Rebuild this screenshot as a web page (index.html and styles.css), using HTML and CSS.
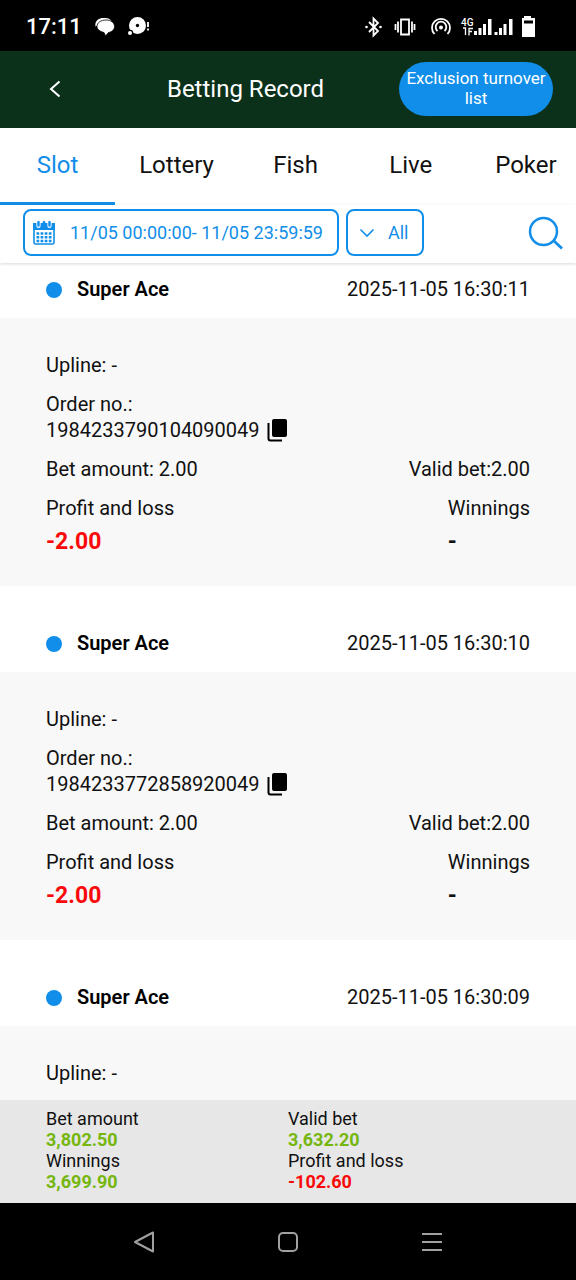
FILE: index.html
```html
<!DOCTYPE html>
<html lang="en">
<head>
<meta charset="utf-8">
<meta name="viewport" content="width=device-width, initial-scale=1">
<title>Betting Record</title>
<link rel="stylesheet" href="styles.css">
</head>
<body>
<svg class="defs" width="0" height="0" aria-hidden="true">
  <symbol id="copy" viewBox="0 0 21 24">
    <rect x="5" y="1" width="15" height="18" rx="2" fill="#000"/>
    <path d="M1.500 5v15.500q0 2 2 2H15" fill="none" stroke="#000" stroke-width="2"/>
  </symbol>
</svg>
<div class="status">
  <div class="status-side">
    <span class="clock">17:11</span>
    <svg width="20" height="20" viewBox="0 0 20 20" aria-hidden="true">
      <path d="M.5 9.500C-.5 4 3.500 1 8.500 1 12 1 15 1.500 16.500 4L4 8z" fill="#fff"/>
      <path d="M11 3c5 0 8.500 2.500 8.500 6.500 0 3-2.500 5.500-6 6L10.500 19l-1.500-3.500C5 14.500 2 12.500 2 9.500 2 5.500 6 3 11 3z" fill="#fff" stroke="#000" stroke-width=".8"/>
    </svg>
    <svg width="22" height="20" viewBox="0 0 22 20" aria-hidden="true">
      <circle cx="9.500" cy="8.500" r="8.500" fill="#fff"/><circle cx="9.500" cy="8.500" r="1.700" fill="#000"/>
      <circle cx="2" cy="16" r="3.200" fill="#000"/><circle cx="2" cy="16" r="2" fill="#fff"/>
      <path d="M20 5v5M20 11.500v2" stroke="#fff" stroke-width="1.800"/>
    </svg>
  </div>
  <svg width="172" height="24" viewBox="0 0 172 24" aria-hidden="true">
    <g fill="none" stroke="#fff" stroke-width="1.800">
      <path d="M4 7l9 9-4.500 4.500v-17L13 8l-9 9"/>
      <path d="M36 4.500h8v15h-8zM33 6.500v11M47 6.500v11M30.500 9v6M49.500 9v6"/>
      <path d="M69.500 19a9 9 0 1 1 13 0M72.500 16a5.300 5.300 0 1 1 7 0"/>
    </g>
    <g fill="#fff">
      <circle cx="1.500" cy="12" r="1.300"/><circle cx="15.500" cy="12" r="1.300"/>
      <circle cx="76" cy="12.500" r="2"/>
      <text class="net" x="96" y="11">4G</text>
      <path d="M109 16h3v4h-3zM113.500 13h3v7h-3zM118 9h3v11h-3zM123 4h3.500v16H123zM129.500 17h3v3h-3zM134 13h3v7h-3zM138.500 9h3v11h-3zM144 4h3.500v16H144z"/>
      <path d="M159 1h7v2h4v19h-13V3h2z"/>
    </g>
    <path d="M98 13h2.500v7M104 20.500V13.500h4M104 16.500h3" fill="none" stroke="#fff" stroke-width="1.300"/>
    <path d="M159 5.500h9v3h-9z" fill="#000"/>
  </svg>
</div>
<header class="header">
  <button class="back" aria-label="Back"><svg width="12" height="18" viewBox="0 0 12 18"><path d="M10.500 1.500L2 9l8.500 7.500" fill="none" stroke="#fff" stroke-width="2"/></svg></button>
  <h1>Betting Record</h1>
  <button class="exclusion">Exclusion turnover list</button>
</header>
<nav class="tabs">
  <button class="tab active">Slot</button>
  <button class="tab">Lottery</button>
  <button class="tab">Fish</button>
  <button class="tab">Live</button>
  <button class="tab">Poker</button>
</nav>
<div class="filters">
  <button class="date">
    <svg width="22" height="24" viewBox="0 0 22 24" aria-hidden="true">
      <rect x="1" y="3" width="20" height="20" rx="1.500" fill="none" stroke="#118ee9" stroke-width="1.600"/>
      <path d="M0 2h22v7H0z" fill="#118ee9"/>
      <path d="M5.500 0v5M16.500 0v5" stroke="#fff" stroke-width="4.200" stroke-linecap="round"/>
      <path d="M5.500 1v3.500M11 1v2M16.500 1v3.500" stroke="#118ee9" stroke-width="2.400" stroke-linecap="round"/>
      <path d="M3.500 12.500h15M3.500 16.300h15M3.500 20h15" stroke="#118ee9" stroke-width="2.400" stroke-dasharray="2.700 1.400"/>
    </svg>
    <span>11/05 00:00:00- 11/05 23:59:59</span>
  </button>
  <div class="type">
    <svg width="16" height="10" viewBox="0 0 16 10" aria-hidden="true"><path d="M1.500 1.500L8 8l6.500-6.500" fill="none" stroke="#118ee9" stroke-width="1.600"/></svg>
    <select aria-label="Type"><option>All</option></select>
  </div>
  <button class="search" aria-label="Search"><svg width="36" height="34" viewBox="0 0 36 34"><circle cx="15.500" cy="15.500" r="13.500" fill="none" stroke="#118ee9" stroke-width="2.500"/><path d="M25.500 24.500l8.500 8" stroke="#118ee9" stroke-width="2.800"/></svg></button>
</div>
<main class="list">
  <article class="record">
    <div class="record-head"><i class="dot"></i><h2>Super Ace</h2><time>2025-11-05 16:30:11</time></div>
    <div class="record-body">
      <p>Upline: -</p>
      <div><p>Order no.:</p><div class="order">1984233790104090049<button class="copy" aria-label="Copy"><svg width="21" height="24"><use href="#copy"/></svg></button></div></div>
      <div class="pair"><span>Bet amount: 2.00</span><span>Valid bet:2.00</span></div>
      <div class="pair"><div>Profit and loss<strong class="loss">-2.00</strong></div><div>Winnings<strong>-</strong></div></div>
    </div>
  </article>
  <article class="record">
    <div class="record-head"><i class="dot"></i><h2>Super Ace</h2><time>2025-11-05 16:30:10</time></div>
    <div class="record-body">
      <p>Upline: -</p>
      <div><p>Order no.:</p><div class="order">1984233772858920049<button class="copy" aria-label="Copy"><svg width="21" height="24"><use href="#copy"/></svg></button></div></div>
      <div class="pair"><span>Bet amount: 2.00</span><span>Valid bet:2.00</span></div>
      <div class="pair"><div>Profit and loss<strong class="loss">-2.00</strong></div><div>Winnings<strong>-</strong></div></div>
    </div>
  </article>
  <article class="record">
    <div class="record-head"><i class="dot"></i><h2>Super Ace</h2><time>2025-11-05 16:30:09</time></div>
    <div class="record-body">
      <p>Upline: -</p>
    </div>
  </article>
</main>
<footer class="summary">
  <div>Bet amount<strong class="gain">3,802.50</strong></div>
  <div>Valid bet<strong class="gain">3,632.20</strong></div>
  <div>Winnings<strong class="gain">3,699.90</strong></div>
  <div>Profit and loss<strong class="loss">-102.60</strong></div>
</footer>
<nav class="system" aria-label="System">
  <button aria-label="System back"><svg width="22" height="22" viewBox="0 0 22 22"><path d="M20 1.500v19L2 11z"/></svg></button>
  <button aria-label="Home"><svg width="22" height="22" viewBox="0 0 22 22"><rect x="2" y="2" width="18" height="18" rx="4"/></svg></button>
  <button aria-label="Recent apps"><svg width="22" height="22" viewBox="0 0 22 22"><path d="M1 3h20M1 11h20M1 19h20"/></svg></button>
</nav>
</body>
</html>
```

FILE: styles.css
```css
* {
  box-sizing: border-box;
}

body {
  margin: 0;
  height: 100vh;
  display: flex;
  flex-direction: column;
  overflow: hidden;
  font: 20px/25px Roboto, sans-serif;
  color: #111;
  background: #fff;
}

h1, h2, p {
  margin: 0;
}

button {
  margin: 0;
  padding: 0;
  border: 0;
  background: none;
  font: inherit;
  color: inherit;
}

svg {
  display: block;
  flex: none;
}

.defs {
  position: absolute;
}

.status {
  flex: none;
  display: flex;
  align-items: center;
  justify-content: space-between;
  padding: 15px 39px 12px 26px;
  background: #000;
  color: #fff;
}

.status-side {
  display: flex;
  align-items: center;
  gap: 13px;
}

.clock {
  font-size: 22px;
  line-height: 24px;
  font-weight: 500;
}

.net {
  font-size: 10px;
  font-weight: 500;
}

.header {
  flex: none;
  display: grid;
  grid-template-columns: 109px 1fr 154px;
  align-items: center;
  padding: 11px 23px 12px 0;
  background: #0b311a;
  color: #fff;
}

.back {
  justify-self: center;
}

.header h1 {
  font-size: 24px;
  line-height: 30px;
  font-weight: 400;
  text-align: center;
  padding-right: 17px;
}

.exclusion {
  padding: 6px 4px 8px;
  border-radius: 27px;
  background: #118ee9;
  font-size: 17px;
  line-height: 20px;
}

.tabs {
  flex: none;
  display: flex;
  overflow: hidden;
}

.tab {
  flex: none;
  min-width: 20%;
  padding: 22px 24px;
  border-bottom: 3px solid transparent;
  font-size: 24px;
  line-height: 30px;
}

.tab.active {
  color: #118ee9;
  border-color: #118ee9;
}

.filters {
  flex: none;
  position: relative;
  display: flex;
  align-items: center;
  gap: 7px;
  padding: 4px 12px 7px 23px;
  box-shadow: 0 1px 3px #00000026;
  color: #118ee9;
}

.date,
.type select {
  height: 47px;
  border: 2px solid #118ee9;
  border-radius: 8px;
  font-size: 18px;
}

.date {
  display: flex;
  align-items: center;
  gap: 15px;
  padding: 0 14px 0 8px;
}

.type {
  position: relative;
}

.type svg {
  position: absolute;
  left: 13px;
  top: 19px;
}

.type select {
  appearance: none;
  padding: 0 13px 0 40px;
  background: transparent;
  font-family: inherit;
  color: inherit;
}

.search {
  margin-left: auto;
}

.list {
  flex: 1;
  min-height: 0;
  overflow: hidden;
}

.record-head {
  display: flex;
  align-items: center;
  padding: 45px 46px 16px;
}

.record:first-child .record-head {
  padding-top: 14px;
}

.dot {
  width: 16px;
  height: 16px;
  margin-right: 15px;
  border-radius: 50%;
  background: #118ee9;
}

.record-head h2 {
  font-size: 20px;
  font-weight: 600;
  color: #000;
}

.record-head time {
  margin-left: auto;
}

.record-body {
  display: flex;
  flex-direction: column;
  gap: 14px;
  padding: 35px 46px 32px;
  background: #f8f8f8;
}

.order {
  display: flex;
  align-items: center;
  gap: 7px;
  height: 26px;
}

.pair {
  display: flex;
  justify-content: space-between;
}

.pair strong {
  display: block;
  margin-top: 8px;
  font-size: 23px;
}

.loss {
  color: #f90a0a;
}

.gain {
  color: #75b60f;
}

.summary {
  flex: none;
  display: grid;
  grid-template-columns: 1fr 1fr;
  padding: 8px 46px 11px;
  background: #e7e7e7;
  font-size: 18px;
  line-height: 21px;
}

.summary strong {
  display: block;
}

.system {
  flex: none;
  height: 77px;
  display: grid;
  grid-template-columns: repeat(3, 25%);
  place-items: center;
  justify-content: center;
  background: #000;
}

.system svg {
  fill: none;
  stroke: #a0a0a0;
  stroke-width: 2;
  stroke-linejoin: round;
}
```
